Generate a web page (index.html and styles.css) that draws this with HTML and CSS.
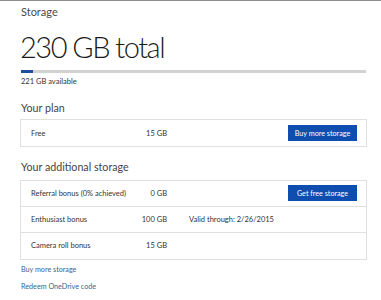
FILE: index.html
```html
<!DOCTYPE html>
<html lang="en">
<head>
    <meta charset="UTF-8">
    <title>Storage</title>
    <link rel="stylesheet" href="styles.css">
</head>
<body>
    <div class="page">
        <h2 class="page-title">Storage</h2>
        <div class="total">230 GB total</div>
        <div class="usage-bar"><div class="usage-fill" style="width: 3.6%;"></div></div>
        <div class="available">221 GB available</div>

        <h3 class="section-title plan-title">Your plan</h3>
        <ul class="table">
            <li class="row">
                <span class="cell-name">Free</span>
                <span class="cell-size">15 GB</span>
                <span class="cell-note"></span>
                <button class="btn">Buy more storage</button>
            </li>
        </ul>

        <h3 class="section-title extra-title">Your additional storage</h3>
        <ul class="table">
            <li class="row">
                <span class="cell-name">Referral bonus (0% achieved)</span>
                <span class="cell-size">0 GB</span>
                <span class="cell-note"></span>
                <button class="btn">Get free storage</button>
            </li>
            <li class="row">
                <span class="cell-name">Enthusiast bonus</span>
                <span class="cell-size">100 GB</span>
                <span class="cell-note">Valid through: 2/26/2015</span>
            </li>
            <li class="row">
                <span class="cell-name">Camera roll bonus</span>
                <span class="cell-size">15 GB</span>
                <span class="cell-note"></span>
            </li>
        </ul>

        <div class="links">
            <a href="#">Buy more storage</a>
            <a href="#">Redeem OneDrive code</a>
        </div>
    </div>
</body>
</html>
```

FILE: styles.css
```css
* {margin: 0; padding: 0; box-sizing: border-box;}
body {background-color: #FFFFFF; color: #222222; font-family: 'Lato', 'Open Sans', sans-serif; border-top: 1px solid #8C8C8C;}
li {list-style-type: none;}
a {color: #3D6191; text-decoration: none;}

.page {width: 367px; padding: 3px 0 0 20px;}
.page-title {font-size: 11px; font-weight: 400; color: #4A4A4A; line-height: 16px; padding-left: 1px;}
.total {font-size: 29px; font-weight: 300; color: #1A1A1A; line-height: 38px; margin-top: 7.5px; letter-spacing: -1.5px;}
.usage-bar {height: 3px; background-color: #D2D2D2; margin: 4.5px 1px 0 1px;}
.usage-fill {height: 100%; background-color: #1E4F9C;}
.available {font-size: 7.5px; color: #333333; margin-top: 2.5px; line-height: 11px; padding-left: 1px;}

.section-title {font-size: 10.7px; font-weight: 400; color: #444444; line-height: 16px; padding-left: 1px;}
.plan-title {margin-top: 13.5px;}
.extra-title {margin-top: 11.5px;}
.table {border: 1px solid #E0E0E0; margin-top: 3px;}
.extra-title + .table {margin-top: 5px;}
.table .row {height: 26px; display: flex; align-items: center; padding: 0 9px 0 10px; font-size: 7.5px; color: #333333; border-bottom: 1px solid #E0E0E0;}
.table .row:last-child {border-bottom: none;}
.row .cell-name {width: 107px;}
.row .cell-size {width: 29px; text-align: right;}
.row .cell-note {flex: 1; padding-left: 22px;}
.btn {background-color: #0F4DAF; color: #FFFFFF; border: none; font-family: inherit; font-size: 7.2px; width: 69px; height: 16px; cursor: pointer;}

.links {display: flex; flex-direction: column; gap: 5.5px; margin-top: 4.5px; font-size: 7.2px; line-height: 11px; padding-left: 1px;}
```
